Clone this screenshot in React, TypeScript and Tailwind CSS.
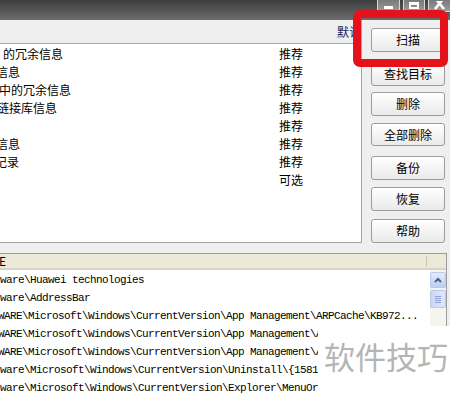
import React from "react";

const cjk = "font-['SimSun','Noto_Sans_CJK_SC',sans-serif]";

const topRows = [
  { text: "的冗余信息", cls: "ml-[3px]", tag: "推荐" },
  { text: "信息", cls: "ml-[-4px]", tag: "推荐" },
  { text: "中的冗余信息", cls: "ml-[-1px]", tag: "推荐" },
  { text: "链接库信息", cls: "ml-[-3px]", tag: "推荐" },
  { text: "", cls: "", tag: "推荐" },
  { text: "信息", cls: "ml-[-4px]", tag: "推荐" },
  { text: "记录", cls: "ml-[-5px]", tag: "推荐" },
  { text: "", cls: "", tag: "可选" },
];

const buttons = [
  { label: "扫描", cls: "mt-0" },
  { label: "查找目标", cls: "mt-[10px]" },
  { label: "删除", cls: "mt-[6px]" },
  { label: "全部删除", cls: "mt-[7px]" },
  { label: "备份", cls: "mt-[10px]" },
  { label: "恢复", cls: "mt-[7px]" },
  { label: "帮助", cls: "mt-[8px]" },
];

// rows under the watermark are clipped where the white box starts
const paths = [
  { text: "ware\\Huawei technologies", cls: "ml-0", w: "w-[430px]" },
  { text: "ware\\AddressBar", cls: "ml-0", w: "w-[430px]" },
  { text: "WARE\\Microsoft\\Windows\\CurrentVersion\\App Management\\ARPCache\\KB972...", cls: "ml-[-2px]", w: "w-[430px]" },
  { text: "WARE\\Microsoft\\Windows\\CurrentVersion\\App Management\\ARPCache", cls: "ml-[-2px]", w: "w-[318px]" },
  { text: "WARE\\Microsoft\\Windows\\CurrentVersion\\App Management\\ARPCache", cls: "ml-[-2px]", w: "w-[318px]" },
  { text: "ware\\Microsoft\\Windows\\CurrentVersion\\Uninstall\\{15810BCF}", cls: "ml-0", w: "w-[318px]" },
  { text: "ware\\Microsoft\\Windows\\CurrentVersion\\Explorer\\MenuOrder", cls: "ml-0", w: "w-[318px]" },
];

const App = () => {
  return (
    <div className={`relative w-[450px] h-[396px] overflow-hidden bg-[#efefef] ${cjk}`}>
      {/* Title bar */}
      <div className="h-[20px] bg-gradient-to-b from-[#3e3e3e] to-[#6c6c6c] flex justify-end gap-[3px]">
        <div className="w-[23px] h-[12px] bg-gradient-to-b from-[#7a7a7a] to-[#9a9a9a] border-x border-b border-[#d8d8d8] rounded-b-[3px] flex items-end justify-center pb-[2px]">
          <div className="w-[9px] h-[3px] bg-white" />
        </div>
        <div className="w-[22px] h-[12px] bg-gradient-to-b from-[#7a7a7a] to-[#9a9a9a] border-x border-b border-[#d8d8d8] rounded-b-[3px] flex items-end justify-center pb-[2px]">
          <div className="w-[10px] h-[7px] border-2 border-t-[3px] border-white" />
        </div>
        <div className="w-[22px] h-[12px] bg-gradient-to-b from-[#7a7a7a] to-[#9a9a9a] border-l border-b border-[#d8d8d8] rounded-bl-[3px] flex items-end justify-center pb-[1px] overflow-hidden">
          <svg width="12" height="9" viewBox="0 0 12 9">
            <path d="M1 -3 L10 8 M10 -3 L1 8" stroke="white" strokeWidth="2.6" />
          </svg>
        </div>
      </div>

      {/* Upper part: list + buttons */}
      <div className="flex h-[223px]">
        <div className="w-[362px] flex flex-col border-r border-b border-[#a5a5a5] bg-white">
          <div className="h-[24px] bg-[#efefef] border-b border-[#a9a9a9] flex items-center justify-end text-[12px] text-[#1c1c5c] overflow-hidden">
            <span className="w-[24px] whitespace-nowrap">默认</span>
          </div>
          <div className="flex-1 pt-[1px] text-[12px] text-black overflow-hidden">
            {topRows.map((r, i) => (
              <div key={i} className="h-[18px] flex items-center">
                <div className="w-[279px] overflow-hidden whitespace-nowrap">
                  <span className={`inline-block ${r.cls}`}>{r.text}</span>
                </div>
                <span>{r.tag}</span>
              </div>
            ))}
          </div>
        </div>

        <div className="flex flex-col pl-[9px] pt-[8px]">
          {buttons.map((b) => (
            <div
              key={b.label}
              className={`w-[74px] h-[24px] ${b.cls} rounded-[3px] border border-[#9c9c9c] bg-gradient-to-b from-[#ffffff] to-[#eaeaea] flex items-center justify-center text-[12px] text-black`}
            >
              {b.label}
            </div>
          ))}
        </div>
      </div>

      {/* Lower part: path list */}
      <div className="mt-[10px] w-[447px] border-t border-r border-[#9c9c9c] bg-white">
        <div className="h-[16px] bg-[#ece9d8] border-b-2 border-[#d8d4c4] flex items-center text-[12px] text-black">
          <span className="w-[426px] overflow-hidden whitespace-nowrap">
            <span className="inline-block ml-[-1px]">E</span>
          </span>
          <div className="w-px h-[11px] bg-[#c8c4b4]" />
        </div>
        <div className="flex">
          <div className="w-[430px] pt-[1px] font-['Liberation_Mono',monospace] text-[11px] tracking-[-0.6px] text-black">
            {paths.map((p, i) => (
              <div key={i} className={`h-[18px] ${p.w} flex items-center whitespace-nowrap overflow-hidden`}>
                <span className={`inline-block ${p.cls}`}>{p.text}</span>
              </div>
            ))}
          </div>
          <div className="w-[16px] bg-[#f5f4ee] flex flex-col items-center pt-[2px]">
            <div className="w-[16px] h-[16px] rounded-[2px] border border-[#b8c8ea] bg-gradient-to-b from-[#e4ecfc] to-[#bccdf4] flex items-center justify-center">
              <svg width="8" height="6" viewBox="0 0 8 6">
                <path d="M1 5 L4 2 L7 5" stroke="#4d6185" strokeWidth="2" fill="none" />
              </svg>
            </div>
            <div className="mt-[2px] w-[16px] h-[18px] rounded-[2px] border border-[#b8c8ea] bg-gradient-to-r from-[#c8d6f8] to-[#dfe7fc] flex flex-col items-center justify-center gap-[1px]">
              <div className="w-[6px] h-px bg-[#8ea3d0]" />
              <div className="w-[6px] h-px bg-[#8ea3d0]" />
              <div className="w-[6px] h-px bg-[#8ea3d0]" />
              <div className="w-[6px] h-px bg-[#8ea3d0]" />
            </div>
          </div>
        </div>
      </div>

      {/* Red highlight around the scan button */}
      <div className="absolute left-[353px] top-[10px] w-[95px] h-[57px] border-[8px] border-[#e5121c] rounded-[7px]" />

      {/* Watermark */}
      <div className="absolute left-[318px] top-[326px] w-[132px] h-[70px] bg-white pl-[6px] pt-[12px] text-[31px] leading-[36px] text-[#b5b5b5] whitespace-nowrap">
        软件技巧
      </div>
    </div>
  );
};

export default App;
